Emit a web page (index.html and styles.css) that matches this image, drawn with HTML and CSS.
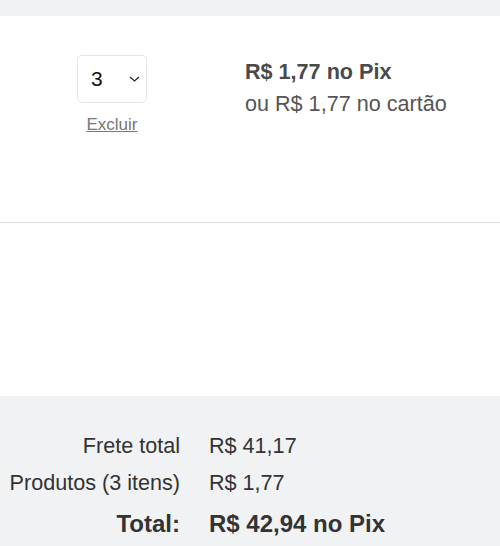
FILE: index.html
```html
<!DOCTYPE html>
<html lang="pt-BR">
<head>
    <meta charset="UTF-8">
    <meta name="viewport" content="width=device-width, initial-scale=1.0">
    <title>Carrinho</title>
    <link rel="stylesheet" href="styles.css">
</head>
<body>
    <div class="top-band"></div>
    <div class="cart-item">
        <div class="qty-col">
            <div class="qty-select">
                <span class="qty-value">3</span>
                <svg class="chevron" width="11" height="6" viewBox="0 0 11 6">
                    <path d="M1 1 L5.5 5 L10 1" fill="none" stroke="#222" stroke-width="1.2"/>
                </svg>
            </div>
            <a href="#" class="remove-link">Excluir</a>
        </div>
        <div class="price-col">
            <p class="price-pix">R$ 1,77 no Pix</p>
            <p class="price-card">ou R$ 1,77 no cartão</p>
        </div>
    </div>
    <div class="empty-area"></div>
    <div class="summary">
        <div class="summary-row">
            <span class="summary-label">Frete total</span>
            <span class="summary-value">R$ 41,17</span>
        </div>
        <div class="summary-row">
            <span class="summary-label">Produtos (3 itens)</span>
            <span class="summary-value">R$ 1,77</span>
        </div>
        <div class="summary-row total">
            <span class="summary-label">Total:</span>
            <span class="summary-value">R$ 42,94 no Pix</span>
        </div>
    </div>
</body>
</html>
```

FILE: styles.css
```css
body {
    margin: 0;
    padding: 0;
    font-family: "Liberation Sans", Arial, sans-serif;
    background-color: #fff;
    color: #333;
}
.top-band {
    height: 16px;
    background-color: #f1f2f4;
}
.cart-item {
    display: grid;
    grid-template-columns: 224px 1fr;
    column-gap: 21px;
    padding-top: 39px;
    height: 167px;
    border-bottom: 1px solid #dcdfe0;
}
.qty-col {
    display: flex;
    flex-direction: column;
    align-items: center;
}
.qty-select {
    box-sizing: border-box;
    width: 70px;
    height: 48px;
    border: 1px solid #e4e4e4;
    border-radius: 5px;
    display: flex;
    align-items: center;
    justify-content: space-between;
    padding: 0 6px 0 13px;
}
.qty-value {
    font-size: 21px;
    color: #111;
}
.chevron {
    display: block;
}
.remove-link {
    margin-top: 12px;
    font-size: 17px;
    color: #777;
    text-decoration: underline;
}
.price-col {
    padding-top: 1px;
}
.price-col p {
    margin: 0;
    font-size: 21.6px;
    line-height: 32.4px;
}
.price-pix {
    font-weight: bold;
    color: #4a4a4a;
}
.price-card {
    color: #555;
}
.empty-area {
    height: 173px;
}
.summary {
    background-color: #f1f2f4;
    padding-top: 31px;
    height: 119px;
}
.summary-row {
    display: grid;
    grid-template-columns: 180px 1fr;
    column-gap: 29px;
    font-size: 21.6px;
    line-height: 37px;
    color: #333;
}
.summary-label {
    text-align: right;
    white-space: nowrap;
}
.summary-row.total {
    margin-top: 4px;
    font-size: 24px;
    font-weight: bold;
}
```
